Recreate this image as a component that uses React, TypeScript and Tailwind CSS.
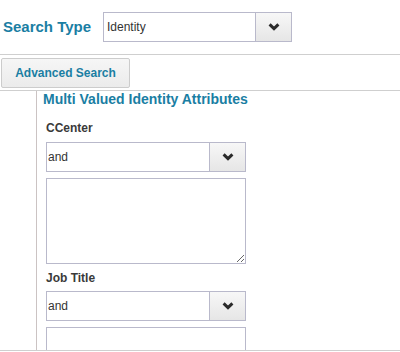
import React from 'react';

const Chevron = () => (
  <svg width="12" height="8" viewBox="0 0 12 8" fill="none">
    <path d="M1.6 1.4 L6 5.6 L10.4 1.4" stroke="#2b2b2b" strokeWidth="3" />
  </svg>
);

function SelectBox({ value, width, padLeft }: { value: string; width: string; padLeft: string }) {
  return (
    <div className={`flex h-[30px] ${width} border border-[#b9b9cb] bg-white`}>
      <div className={`flex-1 flex items-center ${padLeft} text-[12px] text-[#333]`}>{value}</div>
      <div className="w-[36px] flex items-center justify-center border-l border-[#b9b9cb] bg-gradient-to-b from-[#f7f7f7] to-[#e6e6e6]">
        <Chevron />
      </div>
    </div>
  );
}

function Field({ label, first }: { label: string; first?: boolean }) {
  return (
    <div>
      <div className={`${first ? 'mt-[13px]' : 'mt-[6px]'} text-[12px] leading-[16px] font-bold text-[#3a3a3a]`}>{label}</div>
      <div className={first ? 'mt-[6px]' : 'mt-[5px]'}>
        <SelectBox value="and" width="w-[200px]" padLeft="pl-[1px]" />
      </div>
      <textarea className="block mt-[6px] w-[200px] h-[86px] border border-[#b9b9cb] bg-white" />
    </div>
  );
}

export default function App() {
  return (
    <div className="w-[400px] h-[352px] overflow-hidden bg-white font-['Liberation_Sans',Arial,sans-serif]">
      {/* search type row */}
      <div className="h-[55px] border-b border-[#cfcfcf] flex items-start pt-[12px] pl-[3px]">
        <div className="h-[30px] flex items-center w-[100px] text-[15px] font-bold text-[#1a7ea3]">Search Type</div>
        <SelectBox value="Identity" width="w-[189px]" padLeft="pl-[3px]" />
      </div>

      {/* advanced search */}
      <div className="h-[36px] border-b border-[#cfcfcf] pt-[3px] pl-[1px]">
        <button className="h-[30px] w-[129px] rounded-[2px] border border-[#cccccc] bg-gradient-to-b from-[#f6f6f6] to-[#ebebeb] text-[12px] font-bold text-[#1a7ea3]">
          Advanced Search
        </button>
      </div>

      {/* attributes panel */}
      <div className="h-[260px] border-b border-[#cfcfcf] overflow-hidden">
        <div className="ml-[36px] h-full border-l border-[#cbc3c3] pl-[6px]">
          <div className="text-[14px] leading-[16px] font-bold text-[#1a7ea3]">Multi Valued Identity Attributes</div>
          <div className="pl-[3px]">
            <Field label="CCenter" first />
            <Field label="Job Title" />
          </div>
        </div>
      </div>
    </div>
  );
}
